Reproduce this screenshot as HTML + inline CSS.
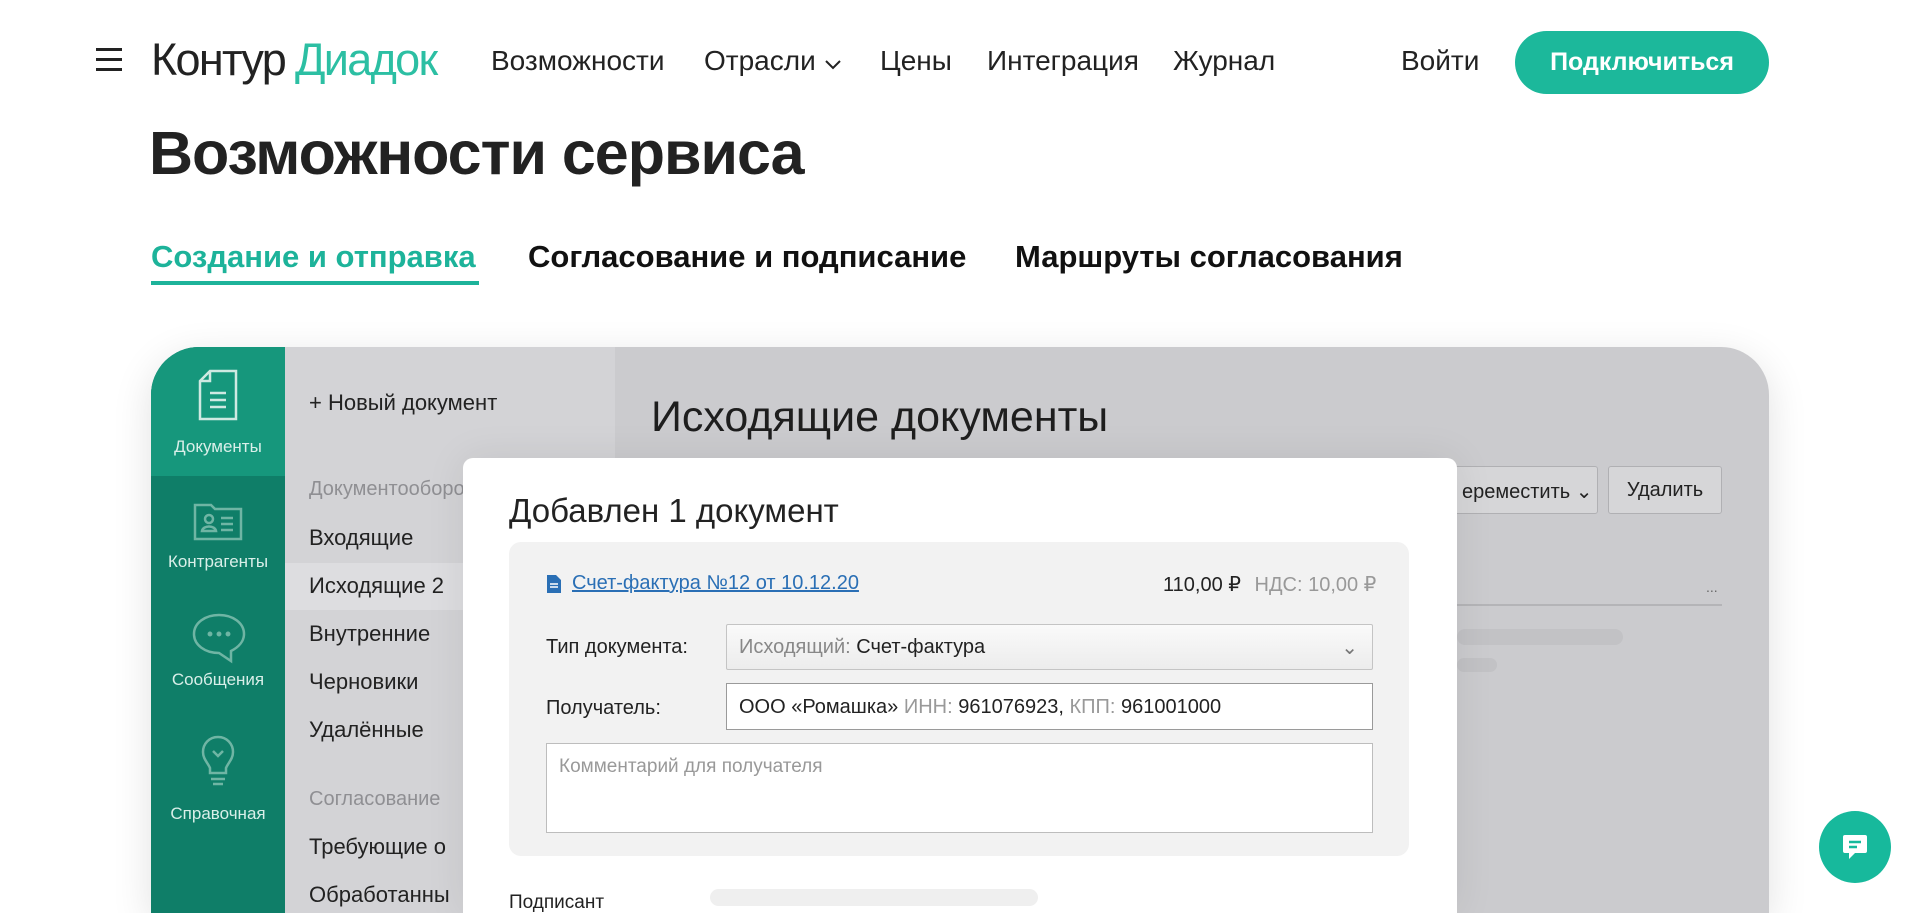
<!DOCTYPE html>
<html style="width:1920px;height:913px;overflow:hidden"><head><meta charset="utf-8"><style>
*{margin:0;padding:0;box-sizing:border-box}
body{width:1920px;height:913px;overflow:hidden;background:#fff;font-family:"Liberation Sans","DejaVu Sans",sans-serif;color:#222;position:relative}
.a{position:absolute;white-space:nowrap}
.nav{font-size:28px;top:45px}
.btn{left:1515px;top:31px;width:254px;height:63px;border-radius:32px;background:#1cb89b;color:#fff;font-size:25px;font-weight:bold;display:flex;align-items:center;justify-content:center}
.tab{top:239px;font-size:31px;font-weight:bold;color:#111}
.card{left:151px;top:347px;width:1618px;height:566px;border-radius:48px 48px 0 0;overflow:hidden;background:#cbcbce;box-shadow:0 10px 40px rgba(0,0,0,.12)}
.sl{color:#222;font-size:22px}
.sb{color:#d9efe9;font-size:17px;text-align:center;width:134px;left:0}
</style></head><body>
<div class="a" style="left:96px;top:48px;width:26px">
<div style="height:3px;background:#222;margin-bottom:7px"></div><div style="height:3px;background:#222;margin-bottom:7px"></div><div style="height:3px;background:#222"></div></div>
<div class="a" style="left:151px;top:34px;font-size:45px;letter-spacing:-1.7px"><span style="color:#222">Контур</span><span style="color:#2cbfa3;margin-left:10px">Диадок</span></div>
<div class="a nav" style="left:491px">Возможности</div>
<div class="a nav" style="left:704px">Отрасли <svg width="18" height="12" viewBox="0 0 18 12"><path d="M2 3l7 7 7-7" fill="none" stroke="#222" stroke-width="2"/></svg></div>
<div class="a nav" style="left:880px">Цены</div>
<div class="a nav" style="left:987px">Интеграция</div>
<div class="a nav" style="left:1173px">Журнал</div>
<div class="a nav" style="left:1401px">Войти</div>
<div class="a btn">Подключиться</div>
<div class="a" style="left:149px;top:118px;font-size:61px;font-weight:bold;color:#222;letter-spacing:-1px">Возможности сервиса</div>
<div class="a tab" style="left:151px;color:#1db39a">Создание и отправка</div>
<div class="a" style="left:151px;top:281px;width:328px;height:4px;background:#1db39a"></div>
<div class="a tab" style="left:528px">Согласование и подписание</div>
<div class="a tab" style="left:1015px">Маршруты согласования</div>

<div class="a card">
 <div class="a" style="left:0;top:0;width:134px;height:566px;background:#0f7e68"></div>
 <div class="a" style="left:0;top:0;width:134px;height:129px;background:#16977c"></div>
 <svg class="a" style="left:47px;top:22px" width="40" height="52" viewBox="0 0 40 52" fill="none" stroke="#cfe9e2" stroke-width="2.5"><path d="M12 2h26v48H2V12z M12 2v10H2"/><path d="M12 24h16M12 31h16M12 38h16"/></svg>
 <div class="a sb" style="top:90px">Документы</div>
 <svg class="a" style="left:42px;top:152px" width="50" height="42" viewBox="0 0 50 42" fill="none" stroke="#6fb5a4" stroke-width="2.5"><path d="M2 6h16l4 4h26v30H2z"/><circle cx="16" cy="20" r="4"/><path d="M9 32c1-6 13-6 14 0z M28 19h12M28 25h12M28 31h12"/></svg>
 <div class="a sb" style="top:205px">Контрагенты</div>
 <svg class="a" style="left:40px;top:265px" width="56" height="52" viewBox="0 0 56 52" fill="none" stroke="#6fb5a4" stroke-width="2.5"><path d="M28 3C14 3 3 11 3 22s11 19 25 19l12 8v-10c8-4 13-10 13-17C53 11 42 3 28 3z"/><circle cx="19" cy="22" r="1.2"/><circle cx="28" cy="22" r="1.2"/><circle cx="37" cy="22" r="1.2"/></svg>
 <div class="a sb" style="top:323px">Сообщения</div>
 <svg class="a" style="left:50px;top:388px" width="34" height="52" viewBox="0 0 34 52" fill="none" stroke="#6fb5a4" stroke-width="2.5"><path d="M17 2C8 2 2 9 2 17c0 7 5 11 7 16v5h16v-5c2-5 7-9 7-16C32 9 26 2 17 2z M12 16l5 5 5-5 M10 44h14M12 49h10"/></svg>
 <div class="a sb" style="top:457px">Справочная</div>

 <div class="a" style="left:134px;top:0;width:330px;height:566px;background:#d3d3d6"></div>
 <div class="a" style="left:134px;top:216px;width:330px;height:47px;background:#dddde0"></div>
 <div class="a sl" style="left:158px;top:43px">+ Новый документ</div>
 <div class="a sl" style="left:158px;top:131px;color:#8f8f93;font-size:20px">Документооборот</div>
 <div class="a sl" style="left:158px;top:178px">Входящие</div>
 <div class="a sl" style="left:158px;top:226px">Исходящие 2</div>
 <div class="a sl" style="left:158px;top:274px">Внутренние</div>
 <div class="a sl" style="left:158px;top:322px">Черновики</div>
 <div class="a sl" style="left:158px;top:370px">Удалённые</div>
 <div class="a sl" style="left:158px;top:441px;color:#8f8f93;font-size:20px">Согласование</div>
 <div class="a sl" style="left:158px;top:487px">Требующие о</div>
 <div class="a sl" style="left:158px;top:535px">Обработанны</div>

 <div class="a" style="left:500px;top:46px;font-size:43px;color:#1e1e1e">Исходящие документы</div>
 <div class="a" style="left:1250px;top:119px;width:197px;height:48px;border:1px solid #b0b0b3;border-radius:3px;background:#d6d6d8;font-size:20px;padding:12px 0 0 60px">ереместить ⌄</div>
 <div class="a" style="left:1457px;top:119px;width:114px;height:48px;border:1px solid #b0b0b3;border-radius:3px;background:#d6d6d8;font-size:20px;text-align:center;padding-top:12px">Удалить</div>
 <div class="a" style="left:1306px;top:257px;width:265px;height:2px;background:#b4b4b7"></div>
 <div class="a" style="left:1555px;top:232px;font-size:14px;color:#666">...</div>
 <div class="a" style="left:1306px;top:282px;width:166px;height:16px;border-radius:8px;background:#c2c2c5"></div>
 <div class="a" style="left:1306px;top:311px;width:40px;height:14px;border-radius:7px;background:#c2c2c5"></div>

 <div class="a" style="left:312px;top:111px;width:994px;height:455px;background:#fff;border-radius:10px 10px 0 0;box-shadow:0 0 40px rgba(0,0,0,.08);overflow:hidden">
  <div class="a" style="left:46px;top:34px;font-size:33px;color:#222">Добавлен 1 документ</div>
  <div class="a" style="left:46px;top:84px;width:900px;height:314px;background:#f2f2f2;border-radius:12px">
   <svg class="a" style="left:38px;top:33px" width="14" height="18" viewBox="0 0 14 18"><path d="M0 0h9l5 5v13H0z" fill="#2a6fb5"/><path d="M3 9h8M3 12h8" stroke="#fff" stroke-width="1.5"/></svg>
   <div class="a" style="left:63px;top:30px;font-size:20px;color:#2a6fb5;text-decoration:underline">Счет-фактура №12 от 10.12.20</div>
   <div class="a" style="left:654px;top:30px;font-size:20px;color:#222">110,00 ₽ <span style="color:#999;margin-left:8px">НДС: 10,00 ₽</span></div>
   <div class="a" style="left:37px;top:94px;font-size:20px">Тип документа:</div>
   <div class="a" style="left:217px;top:82px;width:647px;height:46px;border:1px solid #c4c4c4;border-radius:2px;background:linear-gradient(#fafafa,#ececec);font-size:20px;padding:11px 12px"><span style="color:#888">Исходящий:</span> Счет-фактура<span style="position:absolute;right:14px;top:10px;color:#777">⌄</span></div>
   <div class="a" style="left:37px;top:155px;font-size:20px">Получатель:</div>
   <div class="a" style="left:217px;top:141px;width:647px;height:47px;border:1px solid #9a9a9a;background:#fff;font-size:20px;padding:12px 12px">ООО «Ромашка» <span style="color:#999">ИНН:</span> 961076923, <span style="color:#999">КПП:</span> 961001000</div>
   <div class="a" style="left:37px;top:201px;width:827px;height:90px;border:1px solid #bdbdbd;background:#fff;font-size:19px;color:#999;padding:12px">Комментарий для получателя</div>
  </div>
  <div class="a" style="left:46px;top:434px;font-size:19px">Подписант</div>
  <div class="a" style="left:247px;top:431px;width:328px;height:17px;border-radius:9px;background:#efefef"></div>
 </div>
</div>
<div class="a" style="left:1819px;top:811px;width:72px;height:72px;border-radius:50%;background:#17b99c"></div>
<svg class="a" style="left:1839px;top:831px" width="32" height="32" viewBox="0 0 32 32"><path d="M6 4h20a2 2 0 0 1 2 2v14a2 2 0 0 1-2 2H16l-6 6v-6H6a2 2 0 0 1-2-2V6a2 2 0 0 1 2-2z" fill="#fff"/><path d="M10 11h12M10 16h8" stroke="#17b99c" stroke-width="2.5"/></svg>
</body></html>
